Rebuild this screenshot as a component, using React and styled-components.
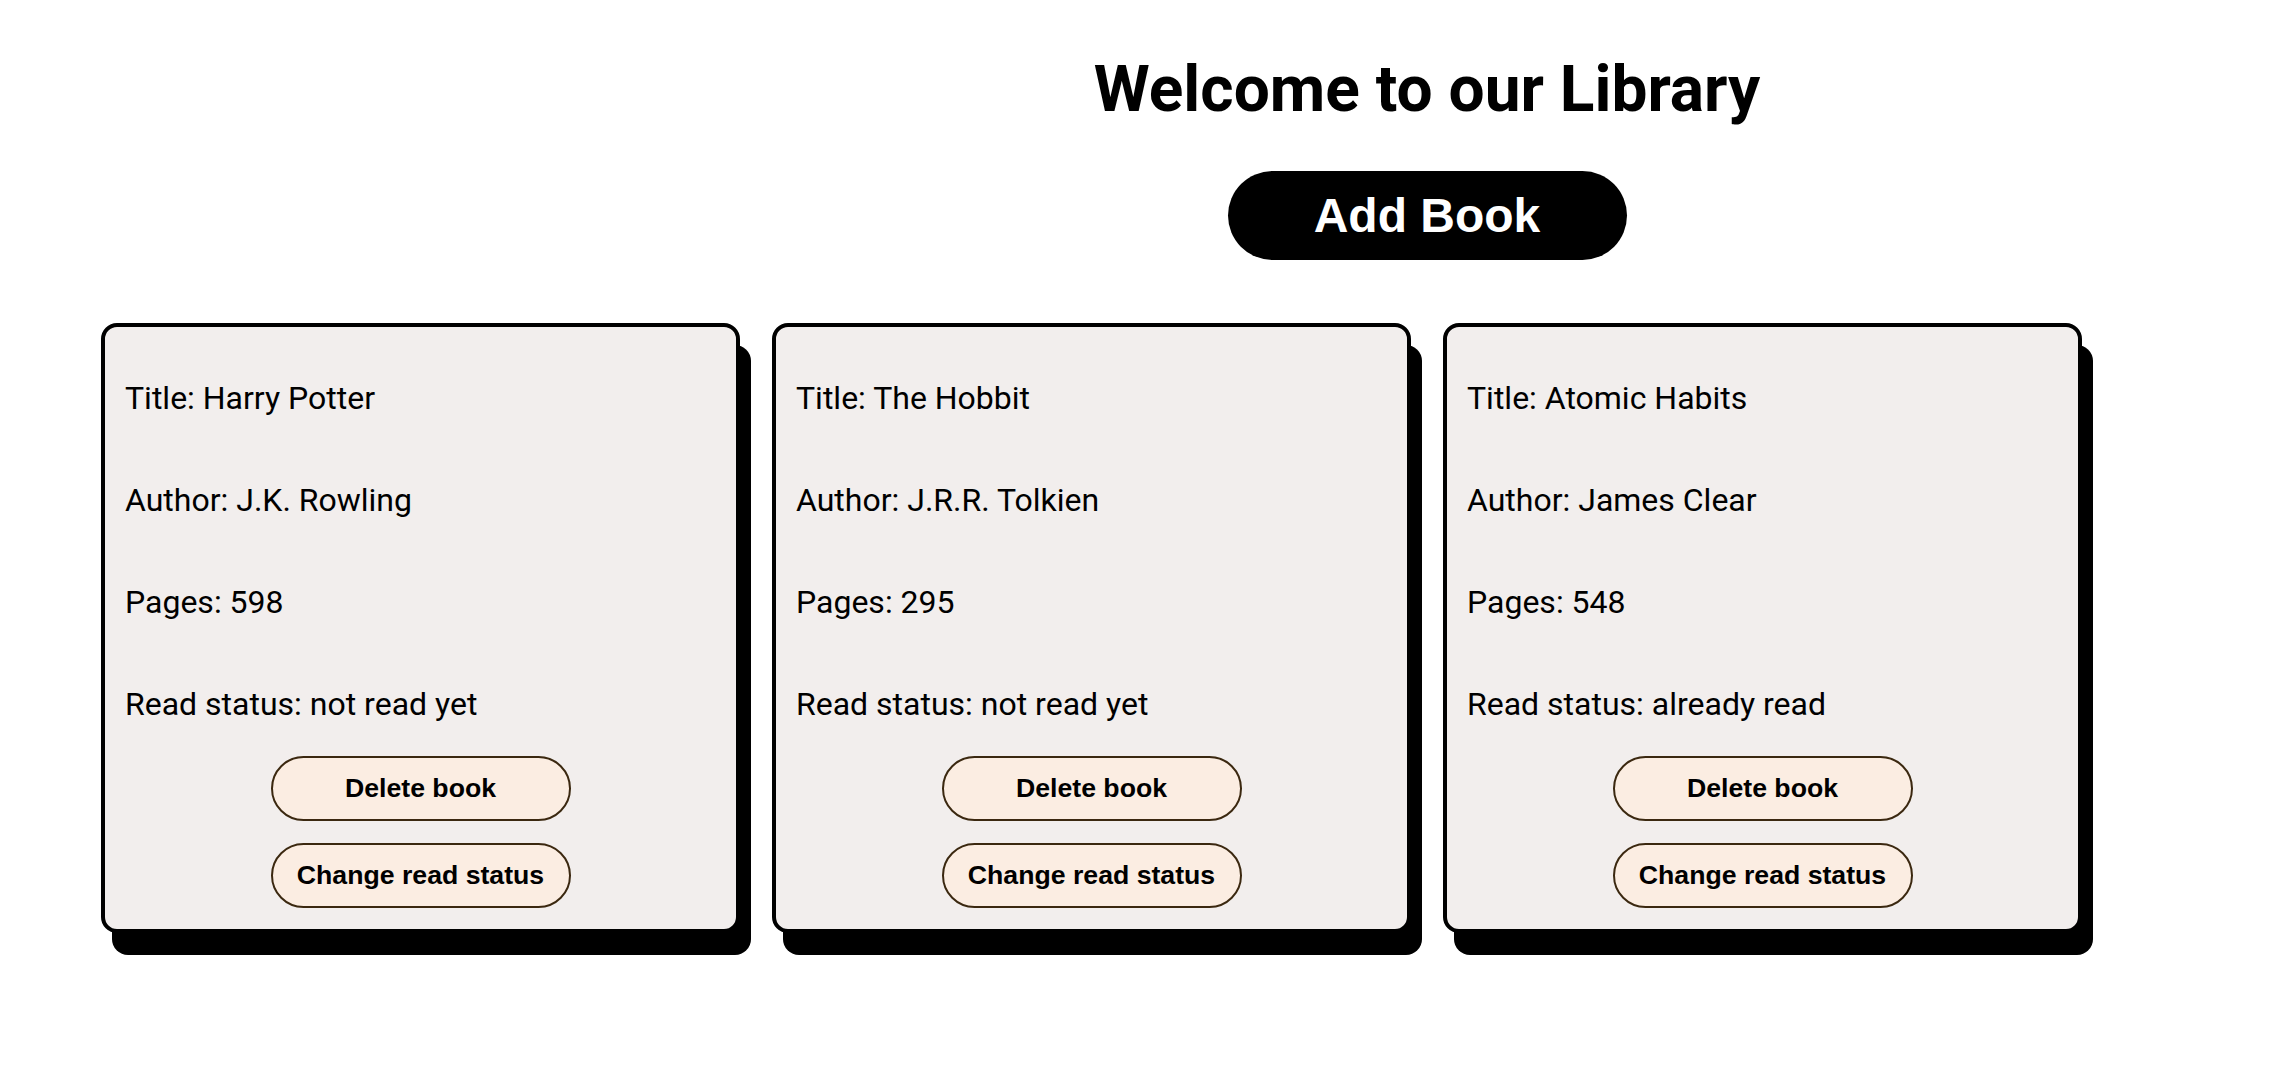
import React from "react";
import styled, { createGlobalStyle } from "styled-components";

const GlobalStyle = createGlobalStyle`
  * {
    box-sizing: border-box;
  }
  body {
    margin: 0;
    background: #ffffff;
    font-family: Roboto, "Noto Sans", sans-serif;
    color: #000000;
  }
`;

const Page = styled.div`
  width: 2290px;
  min-height: 1078px;
  padding-top: 52px;
`;

const Header = styled.header`
  display: flex;
  flex-direction: column;
  align-items: center;
  padding-left: 564px;
  gap: 44px;
`;

const Title = styled.h1`
  margin: 0;
  font-family: Roboto, sans-serif;
  font-weight: 700;
  font-size: 64px;
  line-height: 75px;
`;

const AddButton = styled.button`
  width: 399px;
  height: 89px;
  border: none;
  border-radius: 45px;
  background: #000000;
  color: #ffffff;
  font-family: "Liberation Sans", Arial, sans-serif;
  font-weight: 700;
  font-size: 48px;
  cursor: pointer;
`;

const Shelf = styled.main`
  display: flex;
  gap: 32px;
  padding-left: 101px;
  margin-top: 63px;
`;

const Card = styled.article`
  display: flex;
  flex-direction: column;
  width: 639px;
  padding: 20px 20px 21px;
  background: #f2eeed;
  border: 4px solid #000000;
  border-radius: 16px;
  box-shadow: 11px 22px 0 #000000;
`;

const Field = styled.p`
  margin: 32px 0;
  font-size: 32px;
  line-height: 38px;
`;

const CardButton = styled.button`
  align-self: center;
  width: 300px;
  height: 65px;
  margin-top: ${props => (props.first ? "1px" : "22px")};
  border: 2px solid #3b2810;
  border-radius: 33px;
  background: #fbede2;
  color: #000000;
  font-family: "Liberation Sans", Arial, sans-serif;
  font-weight: 700;
  font-size: 26.67px;
  cursor: pointer;
`;

const books = [
  { title: "Harry Potter", author: "J.K. Rowling", pages: 598, read: false },
  { title: "The Hobbit", author: "J.R.R. Tolkien", pages: 295, read: false },
  { title: "Atomic Habits", author: "James Clear", pages: 548, read: true },
];

export default function App() {
  return (
    <>
      <GlobalStyle />
      <Page>
        <Header>
          <Title>Welcome to our Library</Title>
          <AddButton>Add Book</AddButton>
        </Header>
        <Shelf>
          {books.map(book => (
            <Card key={book.title}>
              <Field>Title: {book.title}</Field>
              <Field>Author: {book.author}</Field>
              <Field>Pages: {book.pages}</Field>
              <Field>
                Read status: {book.read ? "already read" : "not read yet"}
              </Field>
              <CardButton first>Delete book</CardButton>
              <CardButton>Change read status</CardButton>
            </Card>
          ))}
        </Shelf>
      </Page>
    </>
  );
}
